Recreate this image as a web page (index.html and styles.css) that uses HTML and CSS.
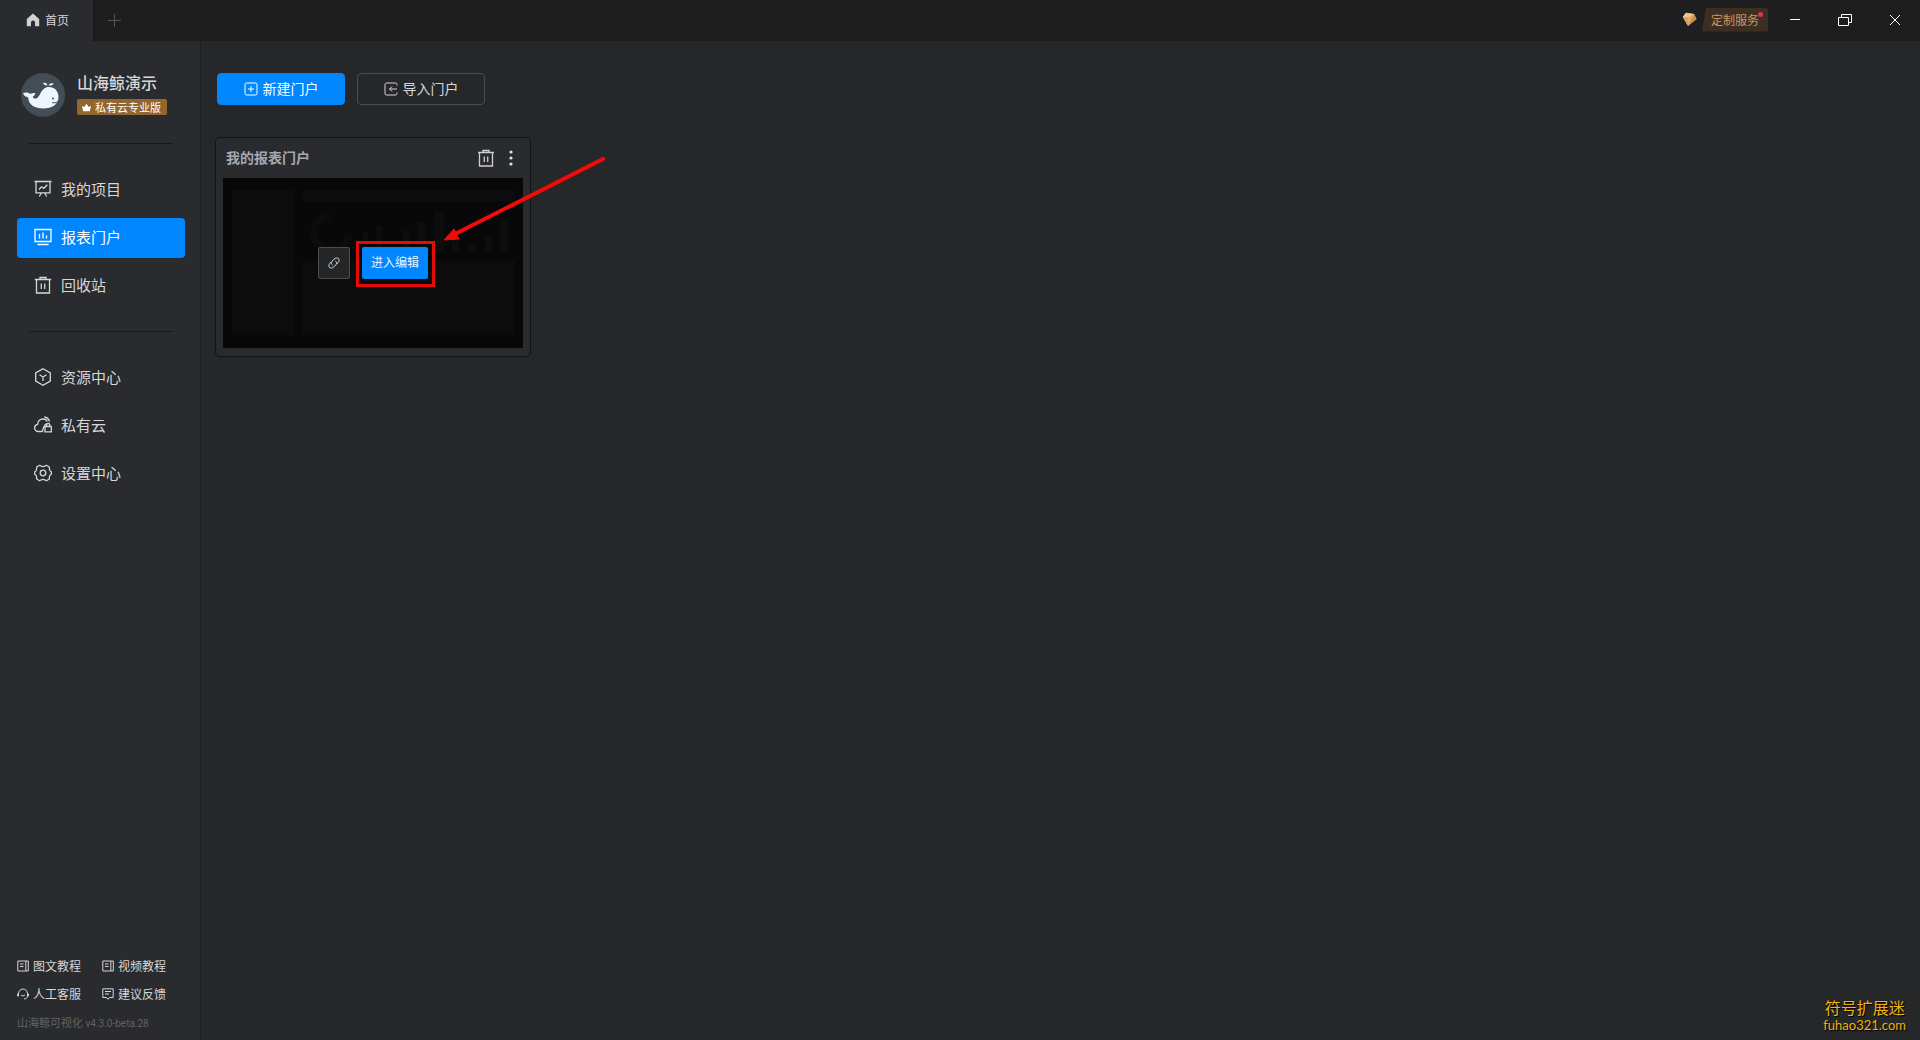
FILE: index.html
```html
<!DOCTYPE html>
<html lang="zh-CN">
<head>
<meta charset="utf-8">
<title>山海鲸可视化</title>
<link rel="stylesheet" href="styles.css">
</head>
<body>
<div class="app">
  <header class="titlebar">
    <a class="tab" href="#">
      <svg width="14" height="14" viewBox="0 0 14 14" fill="#d0d1d3"><path d="M7 .5 13.2 6v7.2H9V9.5a2 2 0 0 0-4 0v3.7H.8V6z"/></svg>
      <span>首页</span>
    </a>
    <button class="new-tab" aria-label="新建标签"><svg width="14" height="14" viewBox="0 0 14 14" stroke="#525355"><path d="M7.5 1v13M1 7.5h13"/></svg></button>
    <a class="service" href="#">
      <span class="service-gem"><svg width="15" height="15" viewBox="0 0 15 15"><path d="M4 .8 12 2 14.5 7 6 14 .8 5z" fill="#e2ab69"/><path d="M4 .8 6 5.500.8 5z" fill="#f3cf9b"/><path d="m4 .8 8 1.200L6 5.500z" fill="#efc48c"/><path d="M12 2l2.500 5L6 14z" fill="#c98f50"/><path d="M.8 5 6 5.500V14z" fill="#dca25f"/></svg></span>
      <span class="service-label">定制服务<i class="dot"></i></span>
    </a>
    <div class="window-controls">
      <button aria-label="最小化"><svg width="14" height="14" viewBox="0 0 14 14" stroke="#fff"><path d="M2 6.500h10"/></svg></button>
      <button aria-label="还原"><svg width="16" height="14" viewBox="0 0 16 14" stroke="#fff" fill="none"><path d="M1.500 4.500h10v8h-10zM4.500 4.500v-3h10v8h-3"/></svg></button>
      <button aria-label="关闭"><svg width="14" height="14" viewBox="0 0 14 14" stroke="#fff"><path d="m2 2 10 10M12 2 2 12"/></svg></button>
    </div>
  </header>

  <div class="body">
    <aside class="sidebar">
      <div class="profile">
        <svg class="avatar" width="44" height="44" viewBox="0 0 44 44"><circle cx="22" cy="22" r="22" fill="#434d57"/><path d="M7.500 26.500c.5 5 6.500 9 14.500 9 9.500 0 15.500-4.500 15.500-11.500 0-6-4-10-9.500-10-8.500 0-8.500 10.500-13 11.500-2 .4-3-.5-3.200-2 1.500-.6 2.300-1.800 2.400-3.500-2-.3-3.500 0-4.700 1-1.800-1.700-4.500-2-7.500-1 .8 2.700 2.500 4 5.100 4.200z" fill="#eef5fc"/><path d="M22 10c2-.5 4 .3 4.500 2.300-2 .4-3.600-.3-4.500-2.300zM27.500 12.300c.8-1.800 2.700-2.500 5-1.800-.8 2-2.500 2.500-5 1.800z" fill="#eef5fc"/><circle cx="32" cy="25.500" r="1" fill="#434d57"/><path d="M31 29.500c1.800.8 4.300.3 5.500-1" stroke="#434d57" fill="none"/></svg>
        <div class="profile-info">
          <span class="profile-name">山海鲸演示</span>
          <span class="badge"><svg width="9" height="9" viewBox="0 0 9 9" fill="#fff"><path d="M0 3 2.300 4 4.500.8 6.700 4 9 3 7.800 8.200H1.200z"/></svg>私有云专业版</span>
        </div>
      </div>
      <nav class="nav">
        <a href="#"><svg viewBox="0 0 18 18"><path d="M.5 1.500h17M2 1.500v11.300h14V1.500M5 9.500l2.500-2.700 2.300 1.500 3.500-3.600M7.300 13l-2 3.500M10.700 13l2 3.500"/></svg>我的项目</a>
        <a href="#" class="active"><svg viewBox="0 0 18 18"><path d="M1 1.500h16v12H1zM3.500 16.500h11M5.500 6v4.500M9 4.500v6M12.500 7.500v3"/></svg>报表门户</a>
        <a href="#"><svg viewBox="0 0 18 18"><path d="M.8 3.500h16.400M6 3.500v-2h6v2M2.500 3.500v13.500h13V3.500M7.300 7.500V13M10.700 7.500V13"/></svg>回收站</a>
      </nav>
      <nav class="nav">
        <a href="#"><svg viewBox="0 0 18 18"><path d="m9 .8 7.300 4.100v8.200L9 17.200l-7.300-4.100V4.900zM5.500 6.800 9 9l3.500-2.200M9 9v4"/></svg>资源中心</a>
        <a href="#"><svg viewBox="0 0 18 18"><path d="M8.800 15.500H4.500c-2.200 0-3.900-1.500-3.900-3.600 0-1.900 1.200-3.300 3-3.600C3.800 5.300 6 3 9 3c2 0 3.500 1 4.300 2.500M10.300 1c2.700.3 4.500 2 5.200 4.500M11 10.500v5.300h6.300v-5.300zM12.500 10.500V9c0-2 3.300-2 3.300 0v1.500M8.500 15.500c1.200-4 .5-6 4-8"/></svg>私有云</a>
        <a href="#"><svg viewBox="0 0 18 18"><path d="M5.600 1.300 7.300 2.200Q9 3 10.700 2.200L12.400 1.300 15.300 3 15.400 5Q15.500 6.600 16.800 7.500L17.400 8V10L16.800 10.500Q15.500 11.400 15.400 13L15.300 15 12.400 16.700 10.700 15.800Q9 15 7.300 15.800L5.600 16.700 2.700 15 2.600 13Q2.500 11.400 1.200 10.500L.6 10V8L1.200 7.500Q2.500 6.600 2.600 5L2.700 3z" stroke-linejoin="round"/><circle cx="9" cy="9" r="2.800"/></svg>设置中心</a>
      </nav>
      <footer class="side-footer">
        <div class="help">
          <a href="#"><svg viewBox="0 0 12 12"><path d="M.8 1h8v10h-8zM8.800 1h2.500v10H8.800M3 4h3.500M3 6.500h3.500"/></svg>图文教程</a>
          <a href="#"><svg viewBox="0 0 12 12"><path d="M.8 1h8v10h-8zM8.800 1h2.500v10H8.800M3 4h3.500M3 6.500h3.500"/></svg>视频教程</a>
          <a href="#"><svg viewBox="0 0 12 12"><path d="M1.500 8.500V5.800C1.500 3 3.500 1 6 1s4.500 2 4.500 4.800v2.400c0 1.500-1 2.600-3.500 2.800M.6 5.500v2.700M11.400 5.500v2.700M4 6.800c1 1.500 3 1.500 4 0"/></svg>人工客服</a>
          <a href="#"><svg viewBox="0 0 12 12"><path d="M.8.800h10.400v8.700H7.500L6 11.300 4.500 9.500H.8zM3 3.500h6M3 6h4"/></svg>建议反馈</a>
        </div>
        <p class="version">山海鲸可视化 <span class="version-number">v4.3.0-beta.28</span></p>
      </footer>
    </aside>

    <main class="content">
      <div class="toolbar">
        <button class="btn primary"><svg viewBox="0 0 14 14"><rect x="1" y="1" width="12" height="12" rx="1.500"/><path d="M7 4v6M4 7h6"/></svg><span>新建门户</span></button>
        <button class="btn"><svg viewBox="0 0 14 14"><path d="M13 3.500V2.500Q13 1 11.500 1h-9Q1 1 1 2.500v9Q1 13 2.500 13h9q1.500 0 1.500-1.500v-1M13 7H5.500M8 4.500 5.500 7 8 9.500"/></svg><span>导入门户</span></button>
      </div>
      <article class="card">
        <div class="card-head">
          <h2>我的报表门户</h2>
          <button class="icon-btn" aria-label="删除"><svg width="18" height="18" viewBox="0 0 18 18" fill="none" stroke="#cfd0d3" stroke-width="1.300"><path d="M1 3.500h16M6 3.500v-2h6v2M2.500 3.500v13.500h13V3.500M7.300 7.500V13M10.700 7.500V13"/></svg></button>
          <button class="icon-btn" aria-label="更多"><svg width="4" height="16" viewBox="0 0 4 16" fill="#e2e3e5"><circle cx="2" cy="2" r="1.600"/><circle cx="2" cy="8" r="1.600"/><circle cx="2" cy="14" r="1.600"/></svg></button>
        </div>
        <div class="preview">
          <svg class="thumb" width="300" height="170" viewBox="0 0 300 170"><path d="M9 12h61v145H9zM79 12h213v12H79zM79 83h213v74H79z" fill="#0c0c0d"/><path d="M107 38A17 17 0 1 0 125 57" fill="none" stroke="#0c0c0d" stroke-width="8"/><path d="M140 54h5v20h-5zM153 48h6v26h-6zM180 52h7v22h-7zM194 44h8v30h-8zM211 34h10v40h-10zM229 54h7v20h-7zM245 67h7v7h-7zM262 58h7v16h-7zM277 42h8v32h-8z" fill="#0d0d0e"/><path d="M25 37h42M25 55h42M25 73h42" stroke="#0e0e0f"/></svg>
          <div class="actions">
            <button class="link-btn" aria-label="复制链接"><svg width="12" height="12" viewBox="0 0 12 12" fill="none" stroke="#d5d6d8"><path d="M4.600 8C3.200 7.300 3 5.500 4.200 4.100L6 2.200C9-.7 12.800 1.900 10.400 5.200L9 6.900M7.400 4C8.800 4.700 9 6.500 7.800 7.900L6 9.800C3 12.700-.8 10.100 1.600 6.800L3 5.100"/></svg></button>
            <div class="edit-wrap"><button class="edit-btn">进入编辑</button></div>
          </div>
        </div>
        <svg class="arrow" width="166" height="88" viewBox="0 0 166 88"><path d="M161 4 13 79" stroke="#f40b09" stroke-width="4" stroke-linecap="round"/><path d="m2 85 10-11 5 10z" fill="#f40b09" stroke="#f40b09"/></svg>
      </article>
      <div class="watermark"><span class="mark-name">符号扩展迷</span><span class="mark-site">fuhao321.com</span></div>
    </main>
  </div>
</div>
</body>
</html>
```
FILE: styles.css
```css
* { box-sizing: border-box; }
body {
  margin: 0;
  background: #262729;
  color: #d6d7d9;
  font: 14px/20px "Noto Sans CJK SC", sans-serif;
}
a { color: inherit; text-decoration: none; }
button { margin: 0; padding: 0; border: 0; background: none; color: inherit; font: inherit; }
svg { display: block; flex: none; }
h2, p { margin: 0; }

.app { display: flex; flex-direction: column; min-height: 100vh; }

.titlebar { display: flex; align-items: center; height: 41px; background: #1e1e1e; }
.tab {
  display: flex; align-items: center; gap: 5px;
  align-self: stretch; width: 94px; padding: 0 0 2px 26px;
  border-right: 1px solid #19191a;
  background: #2a2b2e; font-size: 12px;
}
.new-tab { display: grid; place-items: center; width: 40px; height: 40px; padding-bottom: 2px; }
.service { display: flex; height: 24px; margin: 0 2px 2px auto; color: #cf9560; font-size: 12px; line-height: 24px; }
.service-gem { display: grid; place-items: center; width: 32px; padding-left: 6px; background: #1d1f23; }
.service-label {
  position: relative; width: 66px; text-align: center;
  border-radius: 3px; background: #3d2e24;
  clip-path: polygon(4px 0, 100% 0, 100% 100%, 0 100%);
}
.dot { position: absolute; top: 4px; right: 5px; width: 5px; height: 5px; border-radius: 50%; background: #dc3b40; }
.window-controls { display: flex; }
.window-controls button { display: grid; place-items: center; width: 50px; height: 41px; padding-bottom: 2px; }

.body { display: flex; flex: 1; }
.sidebar {
  display: flex; flex-direction: column; flex: none;
  width: 201px; padding: 32px 15px 6px 17px;
  border-right: 1px solid #1f2022; background: #2a2b2e;
}
.profile { display: flex; gap: 12px; height: 44px; padding-left: 4px; }
.profile-info { display: flex; flex-direction: column; align-items: flex-start; gap: 8px; }
.profile-name { font-size: 16px; line-height: 18px; font-weight: 500; }
.badge {
  display: flex; align-items: center; gap: 4px; height: 16px; padding: 0 6px 0 5px;
  border-radius: 2px; background: #94662f; color: #fff; font-size: 11px; line-height: 16px;
}
.nav { display: flex; flex-direction: column; gap: 8px; position: relative; padding-top: 27px; margin-top: 26px; }
.nav + .nav { margin-top: 25px; }
.nav::before { content: ""; position: absolute; top: 0; left: 12px; right: 12px; height: 1px; background: #17181a; }
.nav a { display: flex; align-items: center; gap: 9px; height: 40px; padding: 0 0 2px 17px; border-radius: 4px; font-size: 15px; }
.nav svg { width: 18px; height: 18px; fill: none; stroke: currentColor; stroke-width: 1.3; }
.nav .active { background: #0087ff; color: #fff; }

.side-footer { margin-top: auto; }
.help { display: grid; grid-template-columns: 85px 1fr; row-gap: 8px; font-size: 12px; }
.help a { display: flex; align-items: center; gap: 4px; }
.help svg { width: 12px; height: 12px; fill: none; stroke: currentColor; }
.version { margin-top: 8px; color: #626366; font-size: 11px; line-height: 20px; }
.version-number { font-family: Roboto, sans-serif; font-size: 10px; }

.content { position: relative; flex: 1; padding: 32px 14px; }
.toolbar { display: flex; gap: 12px; padding-left: 2px; }
.btn {
  display: flex; align-items: center; justify-content: center; gap: 5px;
  width: 128px; height: 32px; border: 1px solid #4b4c50; border-radius: 4px;
}
.btn span { padding-bottom: 2px; }
.btn svg { width: 14px; height: 14px; fill: none; stroke: currentColor; }
.primary { border-color: #0087ff; background: #0087ff; color: #fff; }

.card {
  position: relative; width: 316px; margin-top: 32px; padding: 0 7px 8px;
  border: 1px solid #111214; border-radius: 5px; background: #2a2b2e;
}
.card-head { display: flex; align-items: center; gap: 14px; height: 40px; padding: 0 10px 0 3px; }
.card h2 { flex: 1; padding-bottom: 2px; color: #a4a8b1; font-size: 14px; font-weight: 700; }
.preview { display: grid; place-items: center; height: 170px; background: #080808; }
.thumb, .actions { grid-area: 1 / 1; }
.actions { display: flex; gap: 12px; z-index: 1; }
.link-btn { display: grid; place-items: center; width: 32px; height: 32px; border: 1px solid #4b4c4c; border-radius: 2px; background: #252628; }
.edit-wrap { position: relative; }
.edit-wrap::after { content: ""; position: absolute; inset: -6px -7px -8px -6px; border: 3px solid #e50b0b; pointer-events: none; }
.edit-btn { display: block; width: 66px; height: 32px; padding-bottom: 2px; border-radius: 2px; background: #0087ff; color: #e9f4ff; font-size: 12px; }
.arrow { position: absolute; left: 226px; top: 17px; z-index: 2; }

.watermark {
  position: absolute; right: 14px; bottom: 8px;
  display: flex; flex-direction: column; align-items: center;
  color: #eeb310; text-shadow: 1px 1px 1px #000;
}
.mark-name { font-size: 16px; line-height: 24px; }
.mark-site { font: 13px/13px Lato, sans-serif; }
```
